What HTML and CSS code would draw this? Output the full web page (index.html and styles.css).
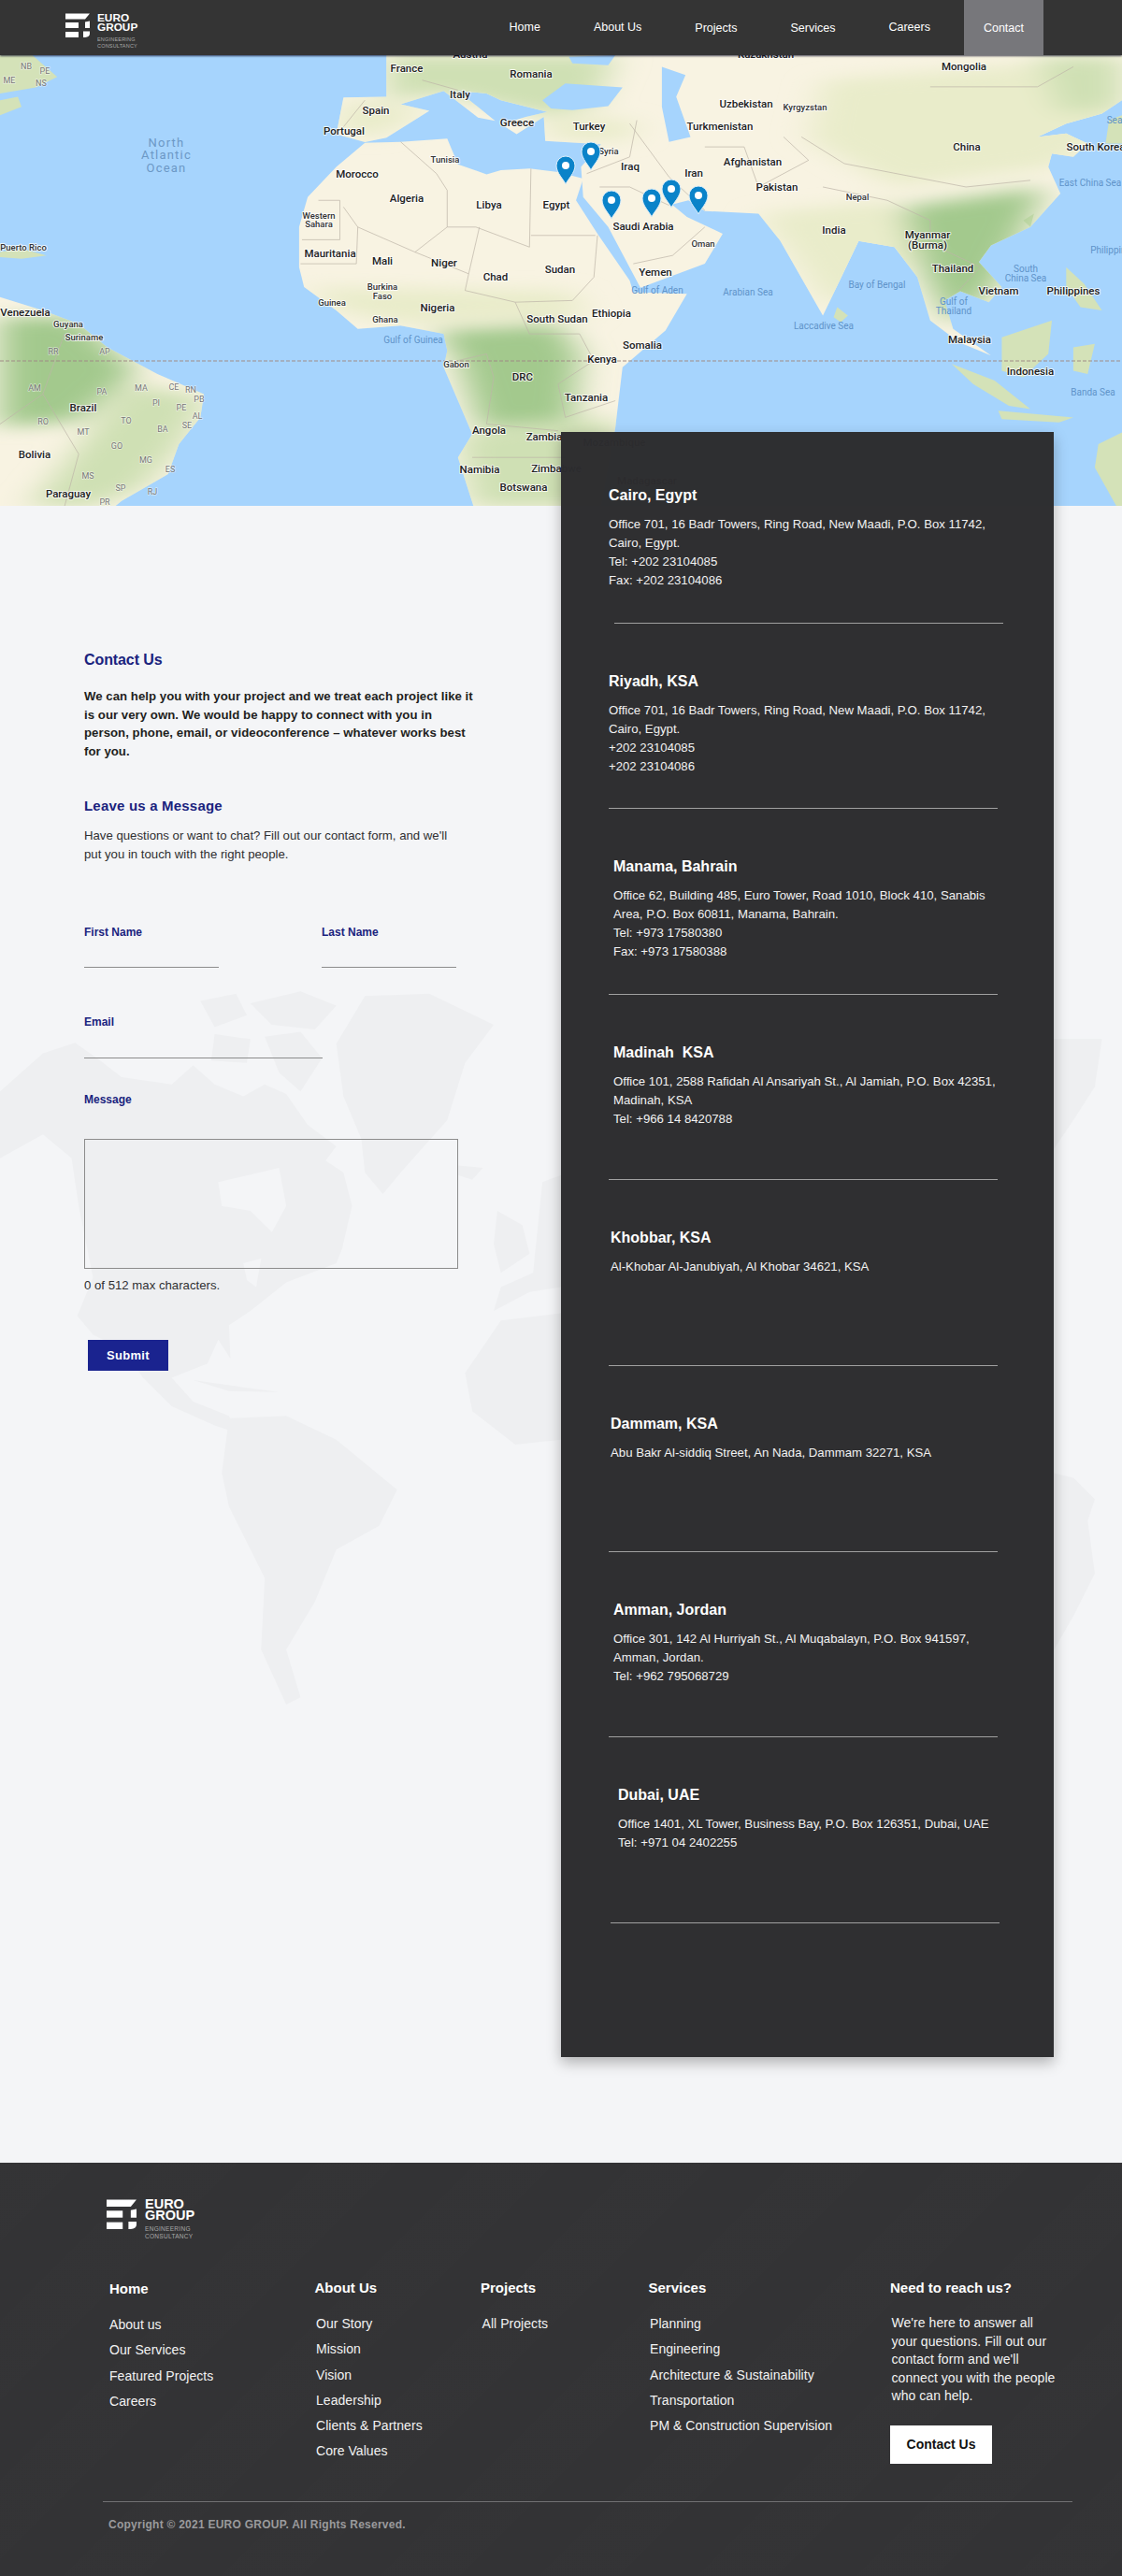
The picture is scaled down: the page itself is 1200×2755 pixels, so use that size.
FILE: index.html
```html
<!DOCTYPE html>
<html lang="en">
<head>
<meta charset="utf-8">
<title>Contact - Euro Group</title>
<link rel="stylesheet" href="styles.css">
</head>
<body>
<svg class="defs" width="0" height="0" aria-hidden="true">
  <symbol id="mark" viewBox="0 0 26 26">
    <path d="M0 0.5H26L21 6.5H0Z"/>
    <rect x="0" y="10" width="14" height="6"/>
    <rect x="0" y="20" width="14" height="6"/>
    <path d="M21 9.5L26 8.5V16H21Z"/>
    <path d="M19 19.5H26V22Q26 25.5 21 26H19Z"/>
  </symbol>
  <symbol id="pin" viewBox="-1 -1 22 32">
    <path class="pin-body" d="M10 30C8 25 0 18 0 10A10 10 0 0 1 20 10C20 18 12 25 10 30Z"/>
    <circle class="pin-dot" cx="10" cy="10" r="4"/>
  </symbol>
  <filter id="soft" x="-30%" y="-30%" width="160%" height="160%"><feGaussianBlur stdDeviation="24"/></filter>
  <clipPath id="landclip">
    <path d="M540 165H1568V300L1540 340L1490 370L1450 410L1490 400L1520 430L1500 470L1470 460L1465 500L1482 580L1440 680L1385 735L1368 785L1400 860L1382 905L1342 872L1320 900L1332 985L1385 1065L1340 1025L1300 960L1282 830L1250 740L1200 722L1150 945L1090 720L1060 640L985 632L962 600L935 615L915 570L960 650L1010 700L985 790L895 862L850 680L815 590L812 500L840 432L762 422L760 350L722 402L700 372L735 350L765 335L700 300L680 280L640 272L692 362L668 352L620 272L560 312L600 332L540 412L510 426L470 402L480 292L540 290L540 230Z"/>
    <path d="M510 428L470 500L430 590L418 680L418 800L425 860L470 930L500 985L560 975L620 1000L625 1050L620 1100L640 1200L660 1300L640 1370L662 1518H840L860 1280L870 1100L930 990L960 880L885 875L880 840L835 700L805 600L815 535L780 515L740 505L700 510L680 522L640 492L625 415L560 425Z"/>
    <path d="M0 890L60 930L110 970L150 1040L220 1120L285 1180L280 1250L250 1330L235 1420L170 1500L160 1518H0Z"/>
  </clipPath>
</svg>

<header class="topbar">
  <a class="logo logo-top" href="#">
    <svg class="logo-mark"><use href="#mark"/></svg>
    <span class="logo-text">
      <b>EURO</b><b>GROUP</b>
      <small>ENGINEERING</small><small>CONSULTANCY</small>
    </span>
  </a>
  <nav class="nav">
    <a href="#">Home</a>
    <a href="#">About Us</a>
    <a class="low" href="#">Projects</a>
    <a class="low" href="#">Services</a>
    <a href="#">Careers</a>
    <a class="low active" href="#">Contact</a>
  </nav>
</header>

<section class="map">
  <svg class="map-svg" viewBox="0 0 1200 483" aria-label="Map of office locations">
    <g transform="translate(0,-59) scale(.7653,.3571)">
      <g class="land">
        <path d="M540 165H1568V300L1540 340L1490 370L1450 410L1490 400L1520 430L1500 470L1470 460L1465 500L1482 580L1440 680L1385 735L1368 785L1400 860L1382 905L1342 872L1320 900L1332 985L1385 1065L1340 1025L1300 960L1282 830L1250 740L1200 722L1150 945L1090 720L1060 640L985 632L962 600L935 615L915 570L960 650L1010 700L985 790L895 862L850 680L815 590L812 500L840 432L762 422L760 350L722 402L700 372L735 350L765 335L700 300L680 280L640 272L692 362L668 352L620 272L560 312L600 332L540 412L510 426L470 402L480 292L540 290L540 230Z"/>
        <path d="M510 428L470 500L430 590L418 680L418 800L425 860L470 930L500 985L560 975L620 1000L625 1050L620 1100L640 1200L660 1300L640 1370L662 1518H840L860 1280L870 1100L930 990L960 880L885 875L880 840L835 700L805 600L815 535L780 515L740 505L700 510L680 522L640 492L625 415L560 425Z"/>
        <path d="M0 890L60 930L110 970L150 1040L220 1120L285 1180L280 1250L250 1330L235 1420L170 1500L160 1518H0Z"/>
        <path class="lush" d="M0 165H45L80 230L50 262L0 280Z"/>
        <path class="lush" d="M0 300L25 290L30 320L0 345Z"/>
        <path class="lush" d="M0 755L30 745L65 765L30 775L0 770Z"/>
        <path class="lush" d="M1560 1515L1530 1400L1535 1330L1568 1295V1518Z"/>
        <path class="lush" d="M1330 1090L1390 1140L1440 1225L1410 1215L1360 1150Z"/>
        <path class="lush" d="M1400 1010L1470 960L1465 1060L1430 1130L1400 1110Z"/>
        <path class="lush" d="M1395 1230L1500 1250L1480 1265L1400 1255Z"/>
        <path class="lush" d="M1490 800L1515 850L1540 930L1510 920L1490 860Z"/>
        <path class="lush" d="M1500 1040L1530 1030L1520 1120L1500 1110Z"/>
        <path class="lush" d="M1170 920L1185 945L1175 965L1165 950Z"/>
        <path class="lush" d="M1430 660L1445 640L1440 680Z"/>
        <path class="lush" d="M1550 360L1568 345V430L1545 430Z"/>
      </g>
      <g clip-path="url(#landclip)">
        <g filter="url(#soft)">
          <path class="g1" d="M0 950H110L190 1110L110 1260L0 1280Z"/>
          <path class="g2" d="M180 1150L290 1190L250 1340L200 1460L130 1518H40L100 1360Z"/>
          <path class="g1" d="M610 990L780 970L810 1060L800 1260L670 1280L640 1080Z"/>
          <path class="g2" d="M640 1300L860 1250L860 1518H660Z"/>
          <path class="g3" d="M430 860L800 870L820 950L560 970L470 930Z"/>
          <path class="g2" d="M540 165H860L830 320L760 345L620 280L540 300Z"/>
          <path class="g3" d="M480 295L600 330L530 410L470 400Z"/>
          <path class="g3" d="M1060 640L1240 600L1300 740L1160 930L1090 720Z"/>
          <path class="g1" d="M1260 620L1460 560L1430 690L1390 860L1330 980L1290 820Z"/>
          <path class="g3" d="M1150 240L1568 170V380L1480 500L1250 560L1130 420Z"/>
          <path class="g2" d="M1450 170H1568V320L1480 340Z"/>
          <path class="g3" d="M760 350L890 360L880 420L770 420Z"/>
        </g>
      </g>
      <path class="sea" d="M758 300L790 250L870 262L850 318L800 330L770 325Z"/>
      <path class="sea" d="M925 200L958 225L945 290L965 410L935 425L925 320Z"/>
      <path class="sea" d="M795 170L860 165L850 195L800 190Z"/>
      <g class="border">
        <path d="M560 425L610 520L625 570L625 680L580 755L500 680L480 620"/>
        <path d="M625 680L665 680L740 740L742 505"/>
        <path d="M742 705H832"/>
        <path d="M422 718H475V600L445 600"/>
        <path d="M500 680L498 790H420"/>
        <path d="M580 755L655 820L670 680"/>
        <path d="M655 820L650 870L720 905L800 900L830 830L835 705"/>
        <path d="M720 905L740 1000L810 1000L830 1080L780 1150L790 1250L860 1200"/>
        <path d="M640 1080L680 1060L690 1130L680 1270L780 1290"/>
        <path d="M660 1370H790"/>
        <path d="M885 790L940 765L985 680"/>
        <path d="M820 520L880 470L890 360"/>
        <path d="M838 560L880 560L935 615"/>
        <path d="M880 370L935 530L985 630"/>
        <path d="M985 440L1040 440L1060 560L1130 480L1095 410"/>
        <path d="M1150 560L1240 600L1300 660L1300 740"/>
        <path d="M1300 260H1450L1500 200"/>
        <path d="M1120 410L1180 490L1350 560L1440 540"/>
        <path d="M1310 740L1370 800L1340 870"/>
        <path d="M640 270L590 240"/>
        <path d="M480 380L510 300"/>
        <path d="M90 1000L60 1180L0 1270"/>
        <path d="M60 1180L110 1360L90 1518"/>
      </g>
    </g>

    <line class="equator" x1="0" y1="327" x2="1200" y2="327"/>

    <text class="l" x="503" y="3">Austria</text>
    <text class="l" x="819" y="3">Kazakhstan</text>
    <text class="l" x="435" y="18">France</text>
    <text class="l" x="568" y="24">Romania</text>
    <text class="l" x="1031" y="16">Mongolia</text>
    <text class="l" x="492" y="46">Italy</text>
    <text class="l" x="798" y="56">Uzbekistan</text>
    <text class="s" x="861" y="59">Kyrgyzstan</text>
    <text class="l" x="402" y="63">Spain</text>
    <text class="l" x="553" y="76">Greece</text>
    <text class="l" x="630" y="80">Turkey</text>
    <text class="l" x="770" y="80">Turkmenistan</text>
    <text class="l" x="368" y="85">Portugal</text>
    <text class="l" x="1034" y="102">China</text>
    <text class="l" x="1172" y="102">South Korea</text>
    <text class="o" x="178" y="98">North</text>
    <text class="o" x="178" y="111">Atlantic</text>
    <text class="o" x="178" y="125">Ocean</text>
    <text class="s" x="476" y="115">Tunisia</text>
    <text class="s" x="651" y="106">Syria</text>
    <text class="l" x="674" y="123">Iraq</text>
    <text class="l" x="742" y="130">Iran</text>
    <text class="l" x="805" y="118">Afghanistan</text>
    <text class="l" x="382" y="131">Morocco</text>
    <text class="l" x="831" y="145">Pakistan</text>
    <text class="w" x="1166" y="140">East China Sea</text>
    <text class="w" x="1192" y="73">Sea</text>
    <text class="l" x="435" y="157">Algeria</text>
    <text class="l" x="523" y="164">Libya</text>
    <text class="l" x="595" y="164">Egypt</text>
    <text class="s" x="917" y="155">Nepal</text>
    <text class="s" x="341" y="175">Western</text>
    <text class="s" x="341" y="184">Sahara</text>
    <text class="l" x="688" y="187">Saudi Arabia</text>
    <text class="l" x="892" y="191">India</text>
    <text class="s" x="752" y="205">Oman</text>
    <text class="l" x="992" y="196">Myanmar</text>
    <text class="l" x="992" y="207">(Burma)</text>
    <text class="s" x="25" y="209">Puerto Rico</text>
    <text class="w" x="1188" y="212">Philippine</text>
    <text class="l" x="353" y="216">Mauritania</text>
    <text class="l" x="409" y="224">Mali</text>
    <text class="l" x="475" y="226">Niger</text>
    <text class="l" x="530" y="241">Chad</text>
    <text class="l" x="599" y="233">Sudan</text>
    <text class="l" x="701" y="236">Yemen</text>
    <text class="l" x="1019" y="232">Thailand</text>
    <text class="w" x="1097" y="232">South</text>
    <text class="w" x="1097" y="242">China Sea</text>
    <text class="s" x="409" y="251">Burkina</text>
    <text class="s" x="409" y="261">Faso</text>
    <text class="w" x="703" y="255">Gulf of Aden</text>
    <text class="w" x="800" y="257">Arabian Sea</text>
    <text class="w" x="938" y="249">Bay of Bengal</text>
    <text class="l" x="1068" y="256">Vietnam</text>
    <text class="l" x="1148" y="256">Philippines</text>
    <text class="s" x="355" y="268">Guinea</text>
    <text class="l" x="468" y="274">Nigeria</text>
    <text class="w" x="1020" y="267">Gulf of</text>
    <text class="w" x="1020" y="277">Thailand</text>
    <text class="l" x="27" y="279">Venezuela</text>
    <text class="l" x="654" y="280">Ethiopia</text>
    <text class="l" x="596" y="286">South Sudan</text>
    <text class="s" x="412" y="286">Ghana</text>
    <text class="s" x="73" y="291">Guyana</text>
    <text class="w" x="881" y="293">Laccadive Sea</text>
    <text class="s" x="90" y="305">Suriname</text>
    <text class="w" x="442" y="308">Gulf of Guinea</text>
    <text class="l" x="1037" y="308">Malaysia</text>
    <text class="l" x="687" y="314">Somalia</text>
    <text class="g" x="57" y="320">RR</text>
    <text class="g" x="112" y="320">AP</text>
    <text class="s" x="488" y="334">Gabon</text>
    <text class="l" x="644" y="329">Kenya</text>
    <text class="l" x="1102" y="342">Indonesia</text>
    <text class="l" x="559" y="348">DRC</text>
    <text class="w" x="1169" y="364">Banda Sea</text>
    <text class="g" x="37" y="359">AM</text>
    <text class="g" x="109" y="363">PA</text>
    <text class="g" x="151" y="359">MA</text>
    <text class="g" x="186" y="358">CE</text>
    <text class="g" x="204" y="361">RN</text>
    <text class="g" x="213" y="371">PB</text>
    <text class="g" x="167" y="375">PI</text>
    <text class="g" x="194" y="380">PE</text>
    <text class="g" x="211" y="389">AL</text>
    <text class="g" x="200" y="399">SE</text>
    <text class="g" x="135" y="394">TO</text>
    <text class="g" x="174" y="403">BA</text>
    <text class="g" x="46" y="395">RO</text>
    <text class="g" x="89" y="406">MT</text>
    <text class="g" x="125" y="421">GO</text>
    <text class="g" x="156" y="436">MG</text>
    <text class="g" x="182" y="446">ES</text>
    <text class="g" x="94" y="453">MS</text>
    <text class="g" x="129" y="466">SP</text>
    <text class="g" x="163" y="470">RJ</text>
    <text class="g" x="112" y="481">PR</text>
    <text class="g" x="28" y="15">NB</text>
    <text class="g" x="48" y="20">PE</text>
    <text class="g" x="10" y="30">ME</text>
    <text class="g" x="44" y="33">NS</text>
    <text class="l" x="89" y="381">Brazil</text>
    <text class="l" x="627" y="370">Tanzania</text>
    <text class="l" x="523" y="405">Angola</text>
    <text class="l" x="582" y="412">Zambia</text>
    <text class="l" x="37" y="431">Bolivia</text>
    <text class="l" x="513" y="447">Namibia</text>
    <text class="l" x="595" y="446">Zimbabwe</text>
    <text class="l" x="560" y="466">Botswana</text>
    <text class="l" x="73" y="473">Paraguay</text>
    <text class="l" x="657" y="418">Mozambique</text>
    <text class="l" x="692" y="459">Madagascar</text>

    <use href="#pin" x="594" y="107" width="22" height="32"/>
    <use href="#pin" x="621" y="92" width="22" height="32"/>
    <use href="#pin" x="643" y="144" width="22" height="32"/>
    <use href="#pin" x="686" y="142" width="22" height="32"/>
    <use href="#pin" x="707" y="132" width="22" height="32"/>
    <use href="#pin" x="736" y="139" width="22" height="32"/>
  </svg>
</section>

<main class="contact">
  <div class="watermark" aria-hidden="true">
    <svg class="watermark-svg" viewBox="0 0 1568 1568" preserveAspectRatio="none">
      <path d="M0 230L60 150L105 128L140 165L170 200L240 215L270 175L300 215L340 240L370 215L400 235L430 300L470 345L455 375L480 400L492 470L478 560L470 590L400 630L350 690L320 720L322 790L305 750L290 800L240 830L270 880L320 910L330 945L300 930L240 890L200 830L170 770L130 740L108 700L130 620L110 470L100 370L60 320L0 370Z"/>
      <path d="M280 40L330 25L345 70L300 95Z"/>
      <path d="M350 45L420 20L470 50L440 100L380 90Z"/>
      <path d="M300 110L350 120L345 170L295 165Z"/>
      <path d="M370 115L420 105L450 160L420 230L390 190Z"/>
      <path class="wm-hole" d="M305 420L390 390L400 470L380 525L350 480L310 470Z"/>
      <path class="wm-hole" d="M340 590L365 580L358 640L345 625Z"/>
      <path d="M510 30L600 25L690 90L650 170L625 290L560 400L535 445L510 400L505 330L480 240L470 130Z"/>
      <path d="M640 385L675 390L660 415L640 405Z"/>
      <path d="M320 915L400 910L470 960L555 1065L530 1140L470 1190L440 1300L400 1400L420 1500L400 1515L365 1400L370 1250L320 1100L310 1030Z"/>
      <path d="M695 480L730 510L740 570L700 610L690 550Z"/>
      <path d="M758 420L784 405V640L740 650L690 690L700 640L745 610Z"/>
      <path d="M784 695L700 710L650 820L660 900L720 970L784 960Z"/>
      <path d="M1473 120L1540 120L1530 220L1500 290L1473 350Z"/>
      <path d="M1473 1030L1500 1040L1530 1085L1520 1130L1530 1240L1500 1330L1473 1400Z"/>
      <path d="M270 835L340 850L390 860L320 858Z"/>
    </svg>
  </div>

  <div class="form-col">
    <h2 class="title">Contact Us</h2>
    <p class="lead">We can help you with your project and we treat each project like it<br>is our very own. We would be happy to connect with you in<br>person, phone, email, or videoconference – whatever works best<br>for you.</p>
    <h3 class="subtitle">Leave us a Message</h3>
    <p class="intro">Have questions or want to chat? Fill out our contact form, and we'll<br>put you in touch with the right people.</p>

    <form class="form">
      <div class="name-row">
        <label class="field short"><span>First Name</span><input type="text"></label>
        <label class="field short"><span>Last Name</span><input type="text"></label>
      </div>
      <label class="field email"><span>Email</span><input type="email"></label>
      <label class="field message"><span>Message</span><textarea></textarea></label>
      <p class="counter">0 of 512 max characters.</p>
      <button class="submit" type="button">Submit</button>
    </form>
  </div>

  <aside class="offices">
    <article class="office">
      <h4>Cairo, Egypt</h4>
      <p>Office 701, 16 Badr Towers, Ring Road, New Maadi, P.O. Box 11742,<br>Cairo, Egypt.<br>Tel: +202 23104085<br>Fax: +202 23104086</p>
      <hr class="rule-shift">
    </article>
    <article class="office">
      <h4>Riyadh, KSA</h4>
      <p>Office 701, 16 Badr Towers, Ring Road, New Maadi, P.O. Box 11742,<br>Cairo, Egypt.<br>+202 23104085<br>+202 23104086</p>
      <hr>
    </article>
    <article class="office inset-5">
      <h4>Manama, Bahrain</h4>
      <p>Office 62, Building 485, Euro Tower, Road 1010, Block 410, Sanabis<br>Area, P.O. Box 60811, Manama, Bahrain.<br>Tel: +973 17580380<br>Fax: +973 17580388</p>
      <hr>
    </article>
    <article class="office inset-5">
      <h4>Madinah &nbsp;KSA</h4>
      <p>Office 101, 2588 Rafidah Al Ansariyah St., Al Jamiah, P.O. Box 42351,<br>Madinah, KSA<br>Tel: +966 14 8420788</p>
      <hr>
    </article>
    <article class="office inset-2">
      <h4>Khobbar, KSA</h4>
      <p>Al-Khobar Al-Janubiyah, Al Khobar 34621, KSA</p>
      <hr>
    </article>
    <article class="office inset-2">
      <h4>Dammam, KSA</h4>
      <p>Abu Bakr Al-siddiq Street, An Nada, Dammam 32271, KSA</p>
      <hr>
    </article>
    <article class="office inset-5">
      <h4>Amman, Jordan</h4>
      <p>Office 301, 142 Al Hurriyah St., Al Muqabalayn, P.O. Box 941597,<br>Amman, Jordan.<br>Tel: +962 795068729</p>
      <hr>
    </article>
    <article class="office inset-10">
      <h4>Dubai, UAE</h4>
      <p>Office 1401, XL Tower, Business Bay, P.O. Box 126351, Dubai, UAE<br>Tel: +971 04 2402255</p>
      <hr class="rule-last">
    </article>
  </aside>
</main>

<footer class="footer">
  <a class="logo logo-foot" href="#">
    <svg class="logo-mark"><use href="#mark"/></svg>
    <span class="logo-text">
      <b>EURO</b><b>GROUP</b>
      <small>ENGINEERING</small><small>CONSULTANCY</small>
    </span>
  </a>
  <div class="foot-cols">
    <div class="foot-col first">
      <h5>Home</h5>
      <ul><li>About us</li><li>Our Services</li><li>Featured Projects</li><li>Careers</li></ul>
    </div>
    <div class="foot-col">
      <h5>About Us</h5>
      <ul><li>Our Story</li><li>Mission</li><li>Vision</li><li>Leadership</li><li>Clients &amp; Partners</li><li>Core Values</li></ul>
    </div>
    <div class="foot-col">
      <h5>Projects</h5>
      <ul><li>All Projects</li></ul>
    </div>
    <div class="foot-col">
      <h5>Services</h5>
      <ul><li>Planning</li><li>Engineering</li><li>Architecture &amp; Sustainability</li><li>Transportation</li><li>PM &amp; Construction Supervision</li></ul>
    </div>
    <div class="foot-col">
      <h5>Need to reach us?</h5>
      <p>We're here to answer all<br>your questions. Fill out our<br>contact form and we'll<br>connect you with the people<br>who can help.</p>
      <a class="foot-btn" href="#">Contact Us</a>
    </div>
  </div>
  <hr class="foot-rule">
  <p class="copyright">Copyright © 2021 EURO GROUP. All Rights Reserved.</p>
</footer>
</body>
</html>
```

FILE: styles.css
```css
* { box-sizing: border-box; }
html, body { margin: 0; padding: 0; }
body {
  font-family: "Liberation Sans", Arial, sans-serif;
  font-size: 14px;
  color: #2f2f31;
  background: #f4f5f7;
}
a { color: inherit; text-decoration: none; }
.defs { position: absolute; }

/* logo */
.logo { display: flex; align-items: flex-start; }
.logo-mark { fill: #fff; display: block; flex: none; }
.logo-text { display: flex; flex-direction: column; color: #fff; }
.logo-text b { font-weight: 700; }
.logo-text small { color: #a9a9a9; font-weight: 400; }

.logo-top { margin-top: 14px; }
.logo-top .logo-mark { width: 26px; height: 26px; margin-right: 8px; }
.logo-top .logo-text b { font-size: 11.8px; line-height: 10px; }
.logo-top .logo-text small { font-size: 5.5px; line-height: 7px; letter-spacing: .2px; }
.logo-top .logo-text small:first-of-type { margin-top: 5px; }

.logo-foot { margin: 0 0 0 114px; width: max-content; }
.logo-foot .logo-mark { width: 32px; height: 32px; margin-right: 9px; }
.logo-foot .logo-text b { font-size: 14.5px; line-height: 11.5px; }
.logo-foot .logo-text small { font-size: 6.5px; line-height: 8px; letter-spacing: .3px; }
.logo-foot .logo-text small:first-of-type { margin-top: 5px; }

/* header */
.topbar {
  height: 59px;
  background: #343434;
  display: flex;
  align-items: flex-start;
  padding: 0 84px 0 70px;
  box-shadow: 0 1px 2px rgba(0, 0, 30, .7);
  position: relative;
  z-index: 2;
}
.nav { margin-left: auto; display: flex; gap: 15px; height: 59px; }
.nav a {
  padding: 22px 21px 0;
  font-size: 12.5px;
  line-height: 15px;
  color: #fff;
}
.nav a.low { padding-top: 23px; }
.nav a.active { background: #77777b; }

/* map */
.map { height: 482px; background: #a6d4fd; overflow: hidden; }
.map-svg { display: block; width: 1200px; height: 483px; font-family: Roboto, "Liberation Sans", sans-serif; }
.land path { fill: #f8f3e2; }
.land .lush { fill: #d4e2b8; }
.g1 { fill: #a3c98d; }
.g2 { fill: #cfe0b4; }
.g3 { fill: #e9ecca; }
.sea { fill: #a6d4fd; }
.border path { fill: none; stroke: #bdb5a7; stroke-width: .7px; vector-effect: non-scaling-stroke; }
.equator { stroke: #a08c86; stroke-width: 1.2px; stroke-dasharray: 4 2; }
.map text { text-anchor: middle; paint-order: stroke; stroke-linejoin: round; }
.l { font-size: 11.5px; font-weight: 500; fill: #222; stroke: rgba(255, 255, 255, .75); stroke-width: 2px; }
.s { font-size: 9.5px; font-weight: 500; fill: #333; stroke: rgba(255, 255, 255, .75); stroke-width: 2px; }
.g { font-size: 9px; fill: #777; stroke: rgba(255, 255, 255, .5); stroke-width: 1.5px; }
.w { font-size: 10px; fill: #5f93c9; }
.o { font-size: 13px; letter-spacing: 1.2px; fill: #6c98c6; }
.pin-body { fill: #0a83c9; stroke: #dbeefa; stroke-width: 1px; }
.pin-dot { fill: #fff; }

/* contact */
.contact {
  position: relative;
  z-index: 1;
  display: flex;
  padding-bottom: 113px;
  background: #f4f5f7;
}
.watermark { position: absolute; left: 0; top: 509px; width: 1200px; height: 800px; }
.watermark-svg { display: block; width: 100%; height: 100%; fill: #eeeff1; }
.watermark-svg .wm-hole { fill: #f4f5f7; }

.form-col {
  position: relative;
  width: 600px;
  flex: none;
  padding: 155px 0 0 90px;
}
.title { margin: 0; font-size: 16px; line-height: 20px; font-weight: 700; color: #1a237e; letter-spacing: -.1px; }
.lead { margin: 19px 0 0; font-size: 13.2px; line-height: 19.6px; font-weight: 700; color: #1f1f21; letter-spacing: .04px; }
.subtitle { margin: 39px 0 0; font-size: 15px; line-height: 20px; font-weight: 700; color: #1a237e; letter-spacing: .2px; }
.intro { margin: 12px 0 0; font-size: 13.2px; line-height: 19.6px; }

.form { margin-top: 66px; }
.name-row { display: flex; gap: 110px; }
.field { display: block; }
.field span { display: block; font-size: 12px; line-height: 14px; font-weight: 700; color: #1a237e; }
.field input {
  display: block;
  width: 100%;
  height: 31px;
  padding: 0;
  border: 0;
  border-bottom: 1px solid #8c8c8c;
  background: transparent;
  outline: 0;
}
.short { width: 144px; }
.email { width: 255px; margin-top: 51px; }
.email input { height: 32px; }
.message { width: 400px; margin-top: 37px; }
.message textarea {
  display: block;
  width: 400px;
  height: 139px;
  margin-top: 35px;
  padding: 0;
  border: 1px solid #8c8c8c;
  border-radius: 0;
  background: transparent;
  resize: none;
  outline: 0;
}
.counter { margin: 8px 0 0; font-size: 13.2px; line-height: 20px; }
.submit {
  display: block;
  width: 86px;
  height: 33px;
  margin: 48px 0 0 4px;
  padding: 0;
  border: 0;
  background: #1a238f;
  color: #fff;
  font-family: inherit;
  font-size: 13px;
  font-weight: 700;
  letter-spacing: .3px;
}

/* offices */
.offices {
  position: relative;
  width: 527px;
  height: 1738px;
  flex: none;
  margin-top: -79px;
  padding-top: 6px;
  background: rgba(44, 44, 46, .985);
  box-shadow: 0 6px 14px rgba(0, 0, 0, .28);
  color: #fff;
}
.office {
  display: flex;
  flex-direction: column;
  height: 198.6px;
  padding: 52px 0 0 51px;
}
.office h4 { margin: 0; font-size: 16px; line-height: 20px; font-weight: 700; }
.office p { margin: 11px 0 0; font-size: 13.2px; line-height: 20px; color: #f2f2f2; }
.office hr {
  width: 416px;
  height: 1px;
  margin: auto 0 0;
  border: 0;
  background: #a0a0a0;
}
.office hr.rule-shift { margin-left: 6px; }
.inset-5 h4, .inset-5 p { margin-left: 5px; }
.inset-2 h4, .inset-2 p { margin-left: 2px; }
.inset-10 h4, .inset-10 p { margin-left: 10px; }
.office hr.rule-last { margin-left: 2px; }

/* footer */
.footer {
  height: 442px;
  padding-top: 39px;
  background-color: #333335;
  background-image: repeating-linear-gradient(135deg, rgba(255, 255, 255, .005) 0 60px, rgba(0, 0, 0, .005) 60px 120px);
  color: #fff;
}
.foot-cols {
  display: grid;
  grid-template-columns: 219.5px 177.5px 179.5px 258.5px 1fr;
  margin-top: 41px;
  padding-left: 117px;
}
.foot-col h5 { margin: 0; font-size: 15px; line-height: 20px; font-weight: 700; }
.foot-col ul { list-style: none; margin: 15px 0 0 1.5px; padding: 0; }
.foot-col.first { padding-top: 1px; }
.foot-col.first ul { margin-left: 0; }
.foot-col li { font-size: 14px; line-height: 27.3px; letter-spacing: .05px; color: #f2f2f2; }
.foot-col p { margin: 18px 0 0 1.5px; font-size: 14px; line-height: 19.5px; letter-spacing: .05px; color: #f2f2f2; }
.foot-btn {
  display: flex;
  align-items: center;
  justify-content: center;
  width: 109px;
  height: 41px;
  margin-top: 21px;
  background: #fff;
  color: #111;
  font-size: 14px;
  font-weight: 700;
}
.foot-rule { width: 1037px; height: 1px; margin: 39px 0 0 110px; border: 0; background: #707072; }
.copyright { margin: 16px 0 0 116px; font-size: 12px; line-height: 16px; font-weight: 700; color: #9a9a9c; letter-spacing: .25px; }
```
